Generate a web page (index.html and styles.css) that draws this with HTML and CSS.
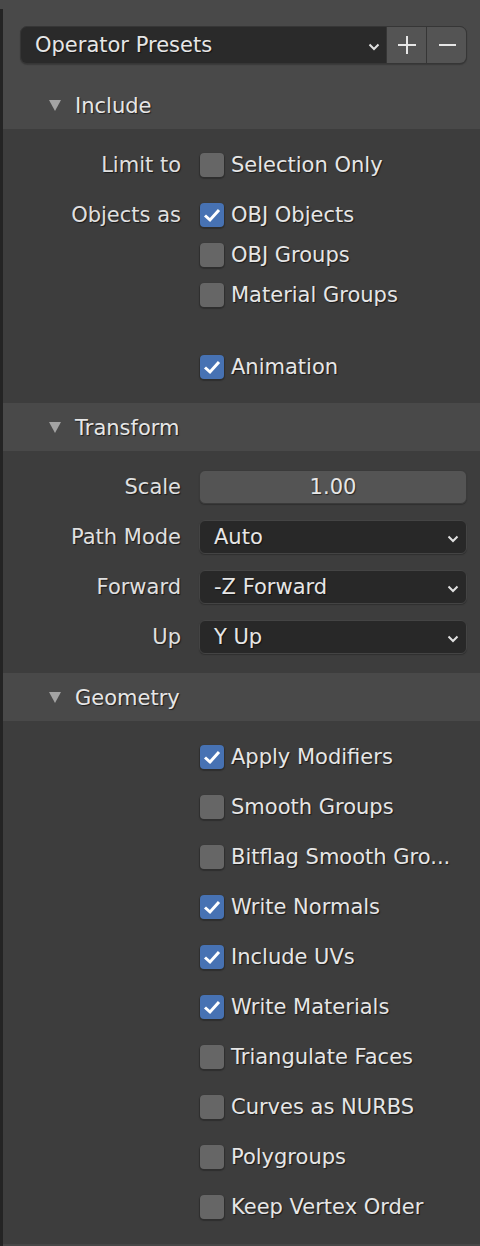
FILE: index.html
```html
<!DOCTYPE html>
<html>
<head>
<meta charset="utf-8">
<link rel="stylesheet" href="styles.css">
</head>
<body>
<div class="topstrip"></div>
<div class="panel">
  <div class="presets">
    <div class="preset-group">
      <div class="preset-select">
        <span>Operator Presets</span>
        <svg class="chev" width="12" height="8" viewBox="0 0 12 8"><polyline points="1.5,1.5 6,6 10.5,1.5" fill="none" stroke="#e0e0e0" stroke-width="2"/></svg>
      </div>
      <div class="pbtn"><svg width="20" height="20" viewBox="0 0 20 20"><path d="M10 1v18M1 10h18" stroke="#e6e6e6" stroke-width="2"/></svg></div>
      <div class="pbtn last"><svg width="20" height="20" viewBox="0 0 20 20"><path d="M2 10h17" stroke="#e6e6e6" stroke-width="2"/></svg></div>
    </div>
  </div>

  <div class="header"><span class="tri"></span>Include</div>
  <div class="section inc">
    <div class="row"><div class="label">Limit to</div><div class="ctl"><span class="cb"></span><span class="txt">Selection Only</span></div></div>
    <div class="row"><div class="label">Objects as</div><div class="ctl"><span class="cb on"><svg width="24" height="24" viewBox="0 0 24 24"><polyline points="5,12.5 10,17 19,7" fill="none" stroke="#fff" stroke-width="3"/></svg></span><span class="txt">OBJ Objects</span></div></div>
    <div class="row tight"><div class="label"></div><div class="ctl"><span class="cb"></span><span class="txt">OBJ Groups</span></div></div>
    <div class="row tight"><div class="label"></div><div class="ctl"><span class="cb"></span><span class="txt">Material Groups</span></div></div>
    <div class="row anim"><div class="label"></div><div class="ctl"><span class="cb on"><svg width="24" height="24" viewBox="0 0 24 24"><polyline points="5,12.5 10,17 19,7" fill="none" stroke="#fff" stroke-width="3"/></svg></span><span class="txt">Animation</span></div></div>
  </div>

  <div class="header"><span class="tri"></span>Transform</div>
  <div class="section tr">
    <div class="row"><div class="label">Scale</div><div class="ctl"><div class="numfield">1.00</div></div></div>
    <div class="row"><div class="label">Path Mode</div><div class="ctl"><div class="dropdown"><span>Auto</span><svg class="chev" width="12" height="8" viewBox="0 0 12 8"><polyline points="1.5,1.5 6,6 10.5,1.5" fill="none" stroke="#e0e0e0" stroke-width="2"/></svg></div></div></div>
    <div class="row"><div class="label">Forward</div><div class="ctl"><div class="dropdown"><span>-Z Forward</span><svg class="chev" width="12" height="8" viewBox="0 0 12 8"><polyline points="1.5,1.5 6,6 10.5,1.5" fill="none" stroke="#e0e0e0" stroke-width="2"/></svg></div></div></div>
    <div class="row"><div class="label">Up</div><div class="ctl"><div class="dropdown"><span>Y Up</span><svg class="chev" width="12" height="8" viewBox="0 0 12 8"><polyline points="1.5,1.5 6,6 10.5,1.5" fill="none" stroke="#e0e0e0" stroke-width="2"/></svg></div></div></div>
  </div>

  <div class="header"><span class="tri"></span>Geometry</div>
  <div class="section">
    <div class="row"><div class="label"></div><div class="ctl"><span class="cb on"><svg width="24" height="24" viewBox="0 0 24 24"><polyline points="5,12.5 10,17 19,7" fill="none" stroke="#fff" stroke-width="3"/></svg></span><span class="txt">Apply Modifiers</span></div></div>
    <div class="row"><div class="label"></div><div class="ctl"><span class="cb"></span><span class="txt">Smooth Groups</span></div></div>
    <div class="row"><div class="label"></div><div class="ctl"><span class="cb"></span><span class="txt">Bitflag Smooth Gro...</span></div></div>
    <div class="row"><div class="label"></div><div class="ctl"><span class="cb on"><svg width="24" height="24" viewBox="0 0 24 24"><polyline points="5,12.5 10,17 19,7" fill="none" stroke="#fff" stroke-width="3"/></svg></span><span class="txt">Write Normals</span></div></div>
    <div class="row"><div class="label"></div><div class="ctl"><span class="cb on"><svg width="24" height="24" viewBox="0 0 24 24"><polyline points="5,12.5 10,17 19,7" fill="none" stroke="#fff" stroke-width="3"/></svg></span><span class="txt">Include UVs</span></div></div>
    <div class="row"><div class="label"></div><div class="ctl"><span class="cb on"><svg width="24" height="24" viewBox="0 0 24 24"><polyline points="5,12.5 10,17 19,7" fill="none" stroke="#fff" stroke-width="3"/></svg></span><span class="txt">Write Materials</span></div></div>
    <div class="row"><div class="label"></div><div class="ctl"><span class="cb"></span><span class="txt">Triangulate Faces</span></div></div>
    <div class="row"><div class="label"></div><div class="ctl"><span class="cb"></span><span class="txt">Curves as NURBS</span></div></div>
    <div class="row"><div class="label"></div><div class="ctl"><span class="cb"></span><span class="txt">Polygroups</span></div></div>
    <div class="row"><div class="label"></div><div class="ctl"><span class="cb"></span><span class="txt">Keep Vertex Order</span></div></div>
  </div>
  <div class="footer"></div>
</div>
</body>
</html>
```

FILE: styles.css
```css
html, body {
  margin: 0;
  padding: 0;
}
body {
  width: 480px;
  height: 1246px;
  overflow: hidden;
  background: #3d3d3d;
  font-family: "DejaVu Sans", sans-serif;
  font-size: 21px;
  color: #e6e6e6;
}
.topstrip {
  height: 9px;
  background: #494949;
}
.panel {
  border-left: 3px solid #242424;
}
.presets {
  background: #494949;
  height: 72px;
  box-sizing: border-box;
  padding: 17px 13px 0 17px;
}
.preset-group {
  display: flex;
  height: 38px;
  box-sizing: border-box;
  border: 1px solid #363636;
  border-radius: 7px;
  background: #363636;
  box-shadow: 0 1px 1px #3a3a3a;
}
.preset-select {
  flex: 1;
  display: flex;
  align-items: center;
  justify-content: space-between;
  background: #2a2a2a;
  border-radius: 6px 0 0 6px;
  padding: 0 6px 0 14px;
  text-shadow: 1px 1px 1px rgba(0,0,0,0.55);
}
.preset-select .chev {
  margin-top: 3px;
}
.pbtn {
  width: 39px;
  display: flex;
  align-items: center;
  justify-content: center;
  background: #545454;
  margin-left: 1px;
}
.pbtn.last {
  border-radius: 0 6px 6px 0;
}
.header {
  height: 48px;
  background: #494949;
  display: flex;
  align-items: center;
  padding-left: 46px;
  padding-top: 2px;
  text-shadow: 1px 1px 1px rgba(0,0,0,0.6);
  box-sizing: border-box;
}
.tri {
  width: 0;
  height: 0;
  border-left: 6px solid transparent;
  border-right: 6px solid transparent;
  border-top: 11px solid #a3a3a3;
  margin-right: 14px;
  margin-top: -1px;
}
.section {
  padding: 16px 13px 17px 0;
  display: flex;
  flex-direction: column;
  gap: 10px;
}
.section.inc {
  padding-top: 16px;
  padding-bottom: 16px;
}
.section.tr {
  padding-bottom: 16px;
}
.row {
  display: flex;
  align-items: center;
  height: 40px;
}
.row.tight {
  margin-top: -10px;
}
.row.anim {
  margin-top: 22px;
}
.label {
  width: 178px;
  text-align: right;
  color: #e0e0e0;
  text-shadow: 1px 1px 1px rgba(0,0,0,0.6);
  flex-shrink: 0;
}
.ctl {
  margin-left: 18px;
  flex: 1;
  display: flex;
  align-items: center;
}
.cb {
  width: 24px;
  height: 24px;
  border-radius: 4px;
  background: #666666;
  margin-left: 1px;
  margin-right: 7px;
  box-shadow: 0 1px 1px 1px #2e2e2e;
  display: flex;
  flex-shrink: 0;
}
.cb.on {
  background: #4772b3;
}
.txt {
  text-shadow: 1px 1px 1px rgba(0,0,0,0.6);
  white-space: nowrap;
}
.numfield {
  flex: 1;
  height: 34px;
  box-sizing: border-box;
  border: 1px solid #3a3a3a;
  border-radius: 6px;
  background: #545454;
  display: flex;
  align-items: center;
  justify-content: center;
  box-shadow: 0 1px 1px #2f2f2f;
  text-shadow: 1px 1px 1px rgba(0,0,0,0.55);
}
.dropdown {
  flex: 1;
  height: 34px;
  box-sizing: border-box;
  border: 1px solid #444444;
  border-radius: 6px;
  background: #282828;
  display: flex;
  align-items: center;
  justify-content: space-between;
  padding: 0 7px 0 14px;
  box-shadow: 0 1px 1px #2f2f2f;
  text-shadow: 1px 1px 1px rgba(0,0,0,0.55);
}
.dropdown .chev {
  margin-top: 3px;
}
.footer {
  height: 10px;
  background: #474747;
}
```
